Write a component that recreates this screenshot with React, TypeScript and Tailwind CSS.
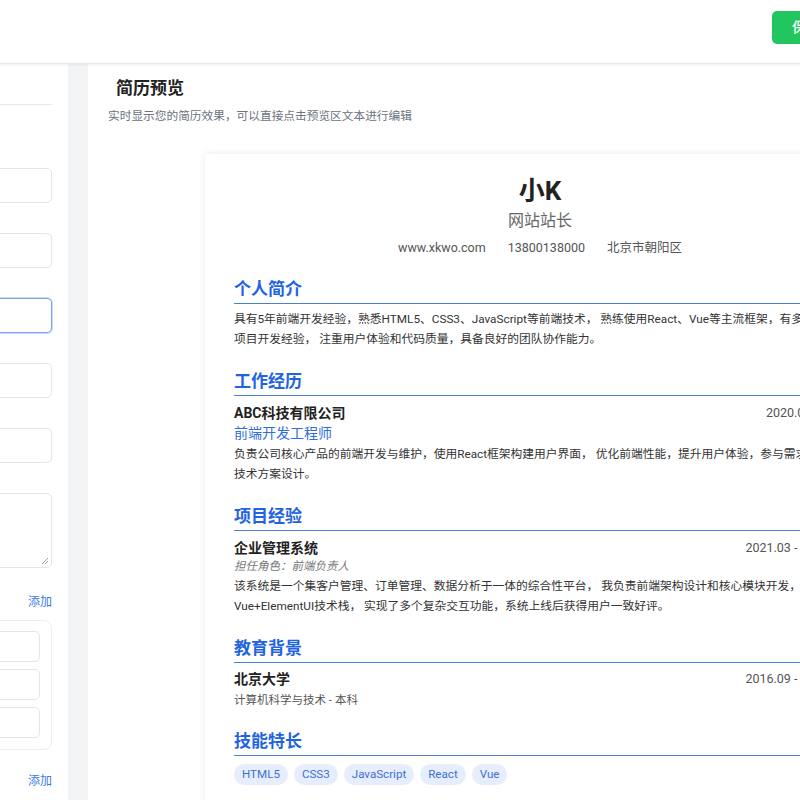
import React from "react";

const font = { fontFamily: 'Roboto, "Noto Sans CJK SC", "Noto Sans", sans-serif' };

function Input({ focused = false, h = "h-[35px]" }: { focused?: boolean; h?: string }) {
  return (
    <div
      className={`w-[320px] ${h} rounded-[5px] bg-white border ${
        focused ? "border-[#7fa4ee] shadow-[0_0_0_1px_#c9d9fb]" : "border-[#e3e5e8]"
      }`}
    />
  );
}

function Section({ title, children }: { title: string; children: React.ReactNode }) {
  return (
    <div className="mt-[20px]">
      <h2 className="text-[17px] leading-[24px] font-bold text-[#1f64e0] pb-[2px] border-b border-[#4a7fd6]">{title}</h2>
      {children}
    </div>
  );
}

export default function App() {
  return (
    <div className="w-[800px] h-[800px] overflow-hidden bg-[#f3f4f6] flex flex-col" style={font}>
      <header className="h-[64px] shrink-0 bg-white border-b border-[#e5e7eb] shadow-[0_1px_3px_rgba(0,0,0,0.06)] flex items-start justify-end relative z-10">
        <div className="mt-[11px] mr-[-40px] w-[68px] h-[33px] rounded-[5px] bg-[#22c55e] text-white text-[14px] font-medium flex items-center pl-[20px]">
          保存
        </div>
      </header>
      <div className="flex flex-1 min-h-0 gap-[20px]">
        <aside className="w-[68px] shrink-0 bg-white overflow-hidden pr-[16px] flex flex-col items-end">
          <div className="w-[320px] mt-[40px] border-t border-[#e5e7eb]" />
          <div className="w-[320px] flex flex-col mt-[63px] gap-[30px]">
            <Input />
            <Input />
            <Input focused />
            <Input />
            <Input />
            <div className="w-[320px] h-[75px] rounded-[5px] bg-white border border-[#e3e5e8] relative">
              <svg className="absolute right-[2px] bottom-[2px]" width="8" height="8" viewBox="0 0 8 8">
                <path d="M7 1 L1 7 M7 4 L4 7" stroke="#9ca3af" strokeWidth="1" />
              </svg>
            </div>
          </div>
          <div className="text-[12px] leading-[18px] text-[#3b7be8] mt-[25px]">添加</div>
          <div className="w-[320px] mt-[9px] border border-[#eceef1] rounded-[8px] pt-[10px] pb-[11px] pr-[11px] flex flex-col items-end gap-[7px]">
            <div className="w-[300px] h-[31px] rounded-[5px] border border-[#e3e5e8]" />
            <div className="w-[300px] h-[31px] rounded-[5px] border border-[#e3e5e8]" />
            <div className="w-[300px] h-[31px] rounded-[5px] border border-[#e3e5e8]" />
          </div>
          <div className="text-[12px] leading-[18px] text-[#3b7be8] mt-[22px]">添加</div>
        </aside>
        <main className="flex-1 min-w-0 bg-white overflow-hidden pl-[20px] pt-[12px]">
          <h1 className="ml-[8px] text-[17px] leading-[24px] font-bold text-[#222]">简历预览</h1>
          <p className="mt-[7px] text-[11.7px] leading-[18px] text-[#6b7280] whitespace-nowrap">
            实时显示您的简历效果，可以直接点击预览区文本进行编辑
          </p>
          <div className="ml-[97px] mt-[29px] w-[670px] shrink-0 bg-white shadow-[0_0_8px_rgba(0,0,0,0.08)] px-[29px] pt-[20px] pb-[30px] text-[#333]">
            <div className="text-center">
              <div className="text-[26px] leading-[34px] font-bold text-[#222]">小K</div>
              <div className="text-[16px] leading-[22px] text-[#666] mt-[2px]">网站站长</div>
              <div className="mt-[7px] text-[12.5px] leading-[18px] text-[#555] flex justify-center gap-[22px]">
                <span>www.xkwo.com</span>
                <span>13800138000</span>
                <span>北京市朝阳区</span>
              </div>
            </div>

            <Section title="个人简介">
              <p className="mt-[6px] text-[11.75px] leading-[19.5px] text-[#333]">
                具有5年前端开发经验，熟悉HTML5、CSS3、JavaScript等前端技术， 熟练使用React、Vue等主流框架，有多个大型项目开发经验， 注重用户体验和代码质量，具备良好的团队协作能力。
              </p>
            </Section>

            <Section title="工作经历">
              <div className="mt-[7px] flex justify-between items-center">
                <span className="text-[14px] leading-[20px] font-bold text-[#222]">ABC科技有限公司</span>
                <span className="text-[12.5px] leading-[20px] text-[#555]">2020.03 - 至今</span>
              </div>
              <div className="text-[14px] leading-[20px] text-[#2f6ee0]">前端开发工程师</div>
              <p className="mt-[2px] text-[11.75px] leading-[19.5px] text-[#333]">
                负责公司核心产品的前端开发与维护，使用React框架构建用户界面， 优化前端性能，提升用户体验，参与需求分析和技术方案设计。
              </p>
            </Section>

            <Section title="项目经验">
              <div className="mt-[7px] flex justify-between items-center">
                <span className="text-[14px] leading-[20px] font-bold text-[#222]">企业管理系统</span>
                <span className="text-[12.5px] leading-[20px] text-[#555]">2021.03 - 2022.06</span>
              </div>
              <div className="text-[11.5px] leading-[17px] italic text-[#777]">担任角色：前端负责人</div>
              <p className="mt-[2px] text-[11.75px] leading-[19.5px] text-[#333]">
                该系统是一个集客户管理、订单管理、数据分析于一体的综合性平台， 我负责前端架构设计和核心模块开发，使用Vue+ElementUI技术栈， 实现了多个复杂交互功能，系统上线后获得用户一致好评。
              </p>
            </Section>

            <Section title="教育背景">
              <div className="mt-[6px] flex justify-between items-center">
                <span className="text-[14px] leading-[20px] font-bold text-[#222]">北京大学</span>
                <span className="text-[12.5px] leading-[20px] text-[#555]">2016.09 - 2020.06</span>
              </div>
              <div className="mt-[2px] text-[11.5px] leading-[18px] text-[#555]">计算机科学与技术 - 本科</div>
            </Section>

            <Section title="技能特长">
              <div className="mt-[8px] flex gap-[6px]">
                {["HTML5", "CSS3", "JavaScript", "React", "Vue"].map((s) => (
                  <span key={s} className="px-[8px] h-[21px] leading-[21px] rounded-full bg-[#e6eefd] text-[#3d6fd6] text-[11.6px]">
                    {s}
                  </span>
                ))}
              </div>
            </Section>
          </div>
        </main>
      </div>
    </div>
  );
}
